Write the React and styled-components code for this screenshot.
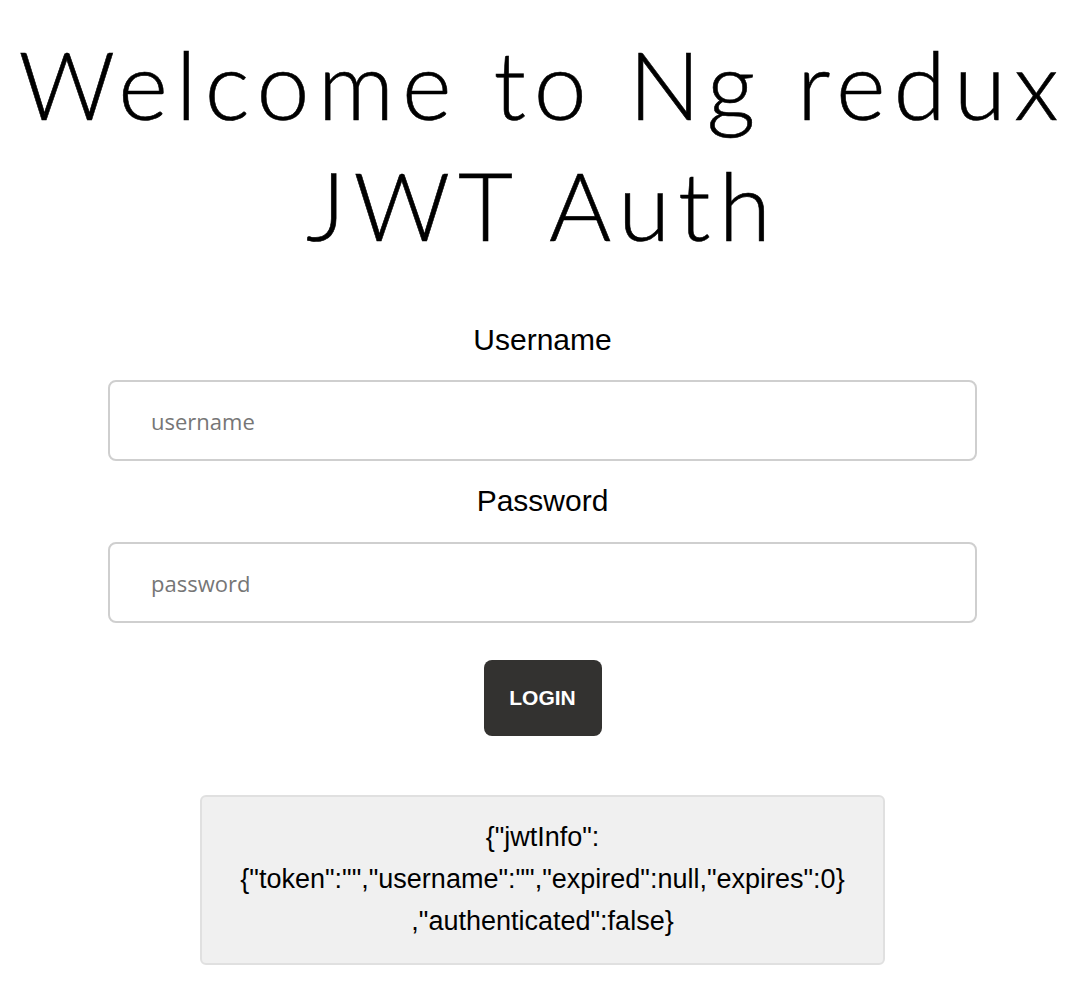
import React from "react"
import styled, { createGlobalStyle } from "styled-components"

const GlobalStyle = createGlobalStyle`
  body {
    margin: 8px 11px 8px 8px;
    background: #fff;
    color: #000;
    font-family: "Liberation Sans", Arial, sans-serif;
  }
`

const Page = styled.div`
  display: flex;
  flex-direction: column;
  align-items: center;
  text-align: center;
`

const Title = styled.h1`
  font-family: Lato, "Open Sans", sans-serif;
  font-weight: 300;
  font-size: 95px;
  line-height: 121px;
  letter-spacing: 8px;
  margin: 15px 0 0;
  color: #000;
  -webkit-text-stroke: 0.6px #000;
`

const Form = styled.form`
  display: flex;
  flex-direction: column;
  align-items: center;
  width: 869px;
  margin-top: 55px;
`

const Label = styled.label`
  font-size: 30px;
  line-height: 40px;
  margin-bottom: ${({ gap }) => gap}px;
`

const Input = styled.input`
  box-sizing: border-box;
  width: 100%;
  height: 81px;
  border: 2px solid #cfcfcf;
  border-radius: 8px;
  padding: 0 41px;
  font-family: "Open Sans", sans-serif;
  font-size: 22px;
  color: #333;
  outline: none;
  margin-bottom: 20px;

  &::placeholder {
    color: #767676;
  }
`

const Button = styled.button`
  width: 118px;
  height: 76px;
  margin-top: 17px;
  border: none;
  border-radius: 8px;
  background: #333230;
  color: #fff;
  font-family: "Liberation Sans", Arial, sans-serif;
  font-weight: bold;
  font-size: 21px;
  cursor: pointer;
`

const StateBox = styled.div`
  box-sizing: border-box;
  width: 685px;
  margin-top: 59px;
  padding: 19px 10px 21px;
  background: #f0f0f0;
  border: 2px solid #e0e0e0;
  border-radius: 6px;
  font-size: 27px;
  line-height: 42px;
`

const Line = styled.span`
  display: block;
`

function App() {
  return (
    <>
      <GlobalStyle />
      <Page>
        <Title>
          Welcome to Ng redux
          <br />
          JWT Auth
        </Title>
        <Form onSubmit={e => e.preventDefault()}>
          <Label gap={20}>Username</Label>
          <Input type="text" placeholder="username" />
          <Label gap={21}>Password</Label>
          <Input type="password" placeholder="password" />
          <Button type="submit">LOGIN</Button>
        </Form>
        <StateBox>
          <Line>{'{"jwtInfo":'}</Line>
          <Line>{'{"token":"","username":"","expired":null,"expires":0}'}</Line>
          <Line>{',"authenticated":false}'}</Line>
        </StateBox>
      </Page>
    </>
  )
}

export default App
